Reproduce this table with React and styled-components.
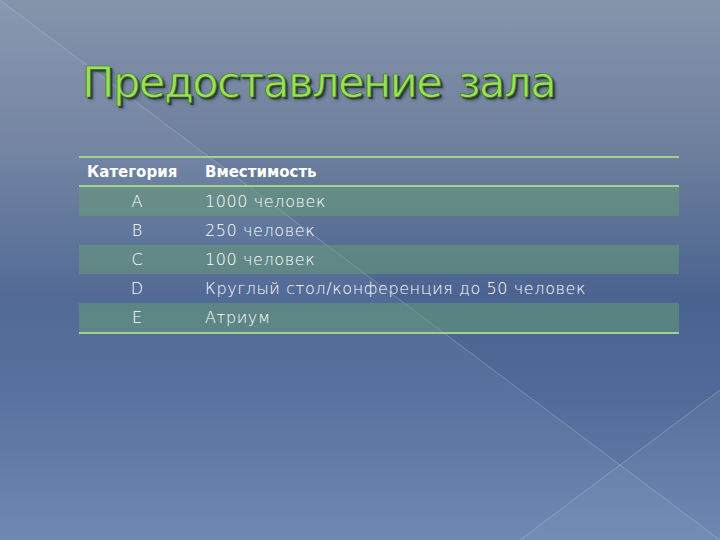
import React from "react";
import styled, { createGlobalStyle } from "styled-components";

const rows = [
  { cat: "A", cap: "1000 человек" },
  { cat: "B", cap: "250 человек" },
  { cat: "C", cap: "100 человек" },
  { cat: "D", cap: "Круглый стол/конференция до 50 человек" },
  { cat: "E", cap: "Атриум" },
];

const Global = createGlobalStyle`
  html, body {
    margin: 0;
    padding: 0;
    width: 720px;
    height: 540px;
    overflow: hidden;
  }
`;

const Slide = styled.div`
  position: relative;
  width: 720px;
  height: 540px;
  overflow: hidden;
  background: linear-gradient(
    to bottom,
    #8694ab 0%,
    #6d7f9d 28%,
    #4a6390 55%,
    #4f6a98 72%,
    #6983b0 100%
  );
  font-family: "DejaVu Sans", sans-serif;
`;

const Backdrop = styled.svg`
  position: absolute;
  inset: 0;
  pointer-events: none;
`;

const Content = styled.div`
  position: relative;
  display: flex;
  flex-direction: column;
  padding: 55px 41px 0 79px;
`;

const Title = styled.h1`
  margin: 0 0 0 3px;
  font-family: "DejaVu Sans", sans-serif;
  font-weight: 400;
  font-size: 43px;
  line-height: 54px;
  letter-spacing: -1.4px;
  word-spacing: 4px;
  color: #96e35a;
  -webkit-text-stroke: 0.7px #3f6e1e;
  text-shadow: 2px 2px 0 #2e3f33, 3px 3px 3px rgba(0, 0, 0, 0.35);
`;

const Table = styled.table`
  margin-top: 47px;
  width: 600px;
  border-collapse: collapse;
  border-top: 2px solid #a3cf8f;
  border-bottom: 2px solid #a3cf8f;
`;

const HeadCell = styled.th`
  height: 27px;
  padding: 0 0 0 ${(p) => (p.$first ? "8px" : "4px")};
  text-align: left;
  font-size: 15px;
  font-weight: 700;
  color: #ffffff;
  border-bottom: 2px solid #a3cf8f;
  width: ${(p) => (p.$first ? "114px" : "auto")};
`;

const Row = styled.tr`
  background: ${(p) => (p.$shaded ? "rgba(104, 160, 116, 0.5)" : "transparent")};
`;

const Cell = styled.td`
  height: 29px;
  padding: ${(p) => (p.$center ? "0 6px 0 0" : "0 0 0 4px")};
  text-align: ${(p) => (p.$center ? "center" : "left")};
  font-size: 16px;
  font-weight: 300;
  letter-spacing: ${(p) => (p.$center ? "0" : "0.6px")};
  color: #ffffff;
`;

export default function App() {
  return (
    <>
      <Global />
      <Slide>
        <Backdrop width="720" height="540" viewBox="0 0 720 540">
          <polygon points="0,0 720,540 0,540" fill="rgba(200,215,240,0.07)" />
          <polygon points="520,540 720,390 720,540" fill="rgba(200,215,240,0.06)" />
          <line x1="0" y1="0" x2="720" y2="540" stroke="rgba(190,205,230,0.35)" strokeWidth="1" />
          <line x1="520" y1="540" x2="720" y2="390" stroke="rgba(190,205,230,0.35)" strokeWidth="1" />
        </Backdrop>
        <Content>
          <Title>Предоставление зала</Title>
          <Table>
            <thead>
              <tr>
                <HeadCell $first>Категория</HeadCell>
                <HeadCell>Вместимость</HeadCell>
              </tr>
            </thead>
            <tbody>
              {rows.map((r, i) => (
                <Row key={r.cat} $shaded={i % 2 === 0}>
                  <Cell $center>{r.cat}</Cell>
                  <Cell>{r.cap}</Cell>
                </Row>
              ))}
            </tbody>
          </Table>
        </Content>
      </Slide>
    </>
  );
}
